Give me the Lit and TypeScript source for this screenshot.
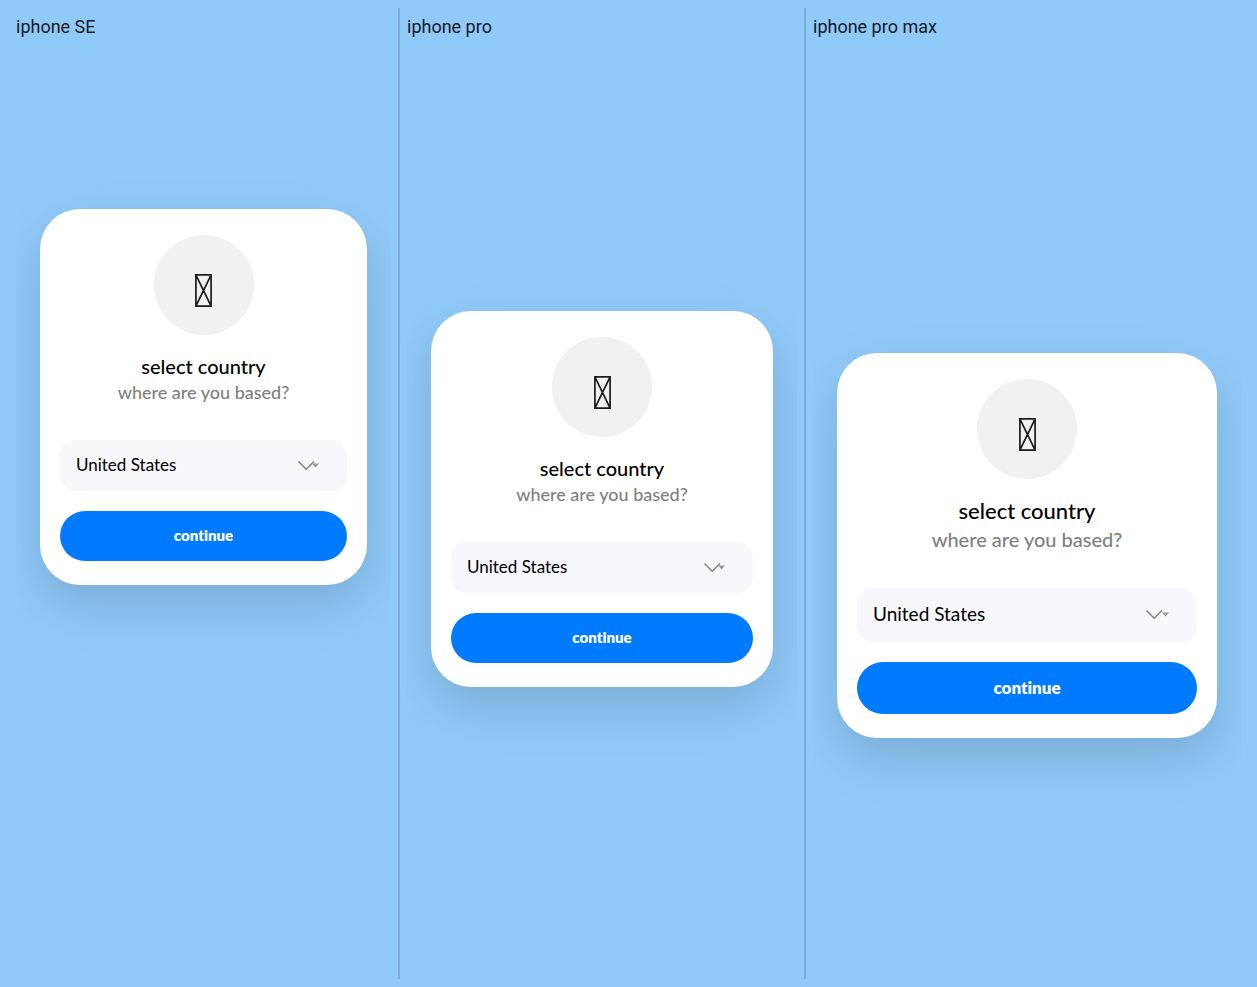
import { LitElement, html, css } from "lit";
import { customElement, property } from "lit/decorators.js";

@customElement("country-card")
class CountryCard extends LitElement {
  @property({ type: Boolean, reflect: true }) large = false;

  static styles = css`
    :host {
      display: block;
      --title: 20px;
      --sub: 18px;
      --field: 17px;
      --action: 15px;
      --line: 26px;
      --copy-top: 18px;
      --copy-bottom: 35px;
      --field-height: 51px;
      --action-height: 50px;
      font-family: Lato, "Open Sans", sans-serif;
      font-variant-ligatures: none;
    }
    :host([large]) {
      --title: 22px;
      --sub: 20px;
      --field: 19px;
      --action: 17px;
      --line: 28px;
      --field-height: 54px;
      --action-height: 52px;
    }
    .card {
      display: flex;
      flex-direction: column;
      padding: 26px 20px 24px;
      background: #fff;
      border-radius: 40px;
      box-shadow: 0 20px 50px rgba(0, 0, 0, 0.15);
    }
    .avatar {
      display: grid;
      place-items: center;
      align-self: center;
      width: 100px;
      height: 100px;
      padding-top: 10px;
      box-sizing: border-box;
      border-radius: 50%;
      background: #f1f1f1;
    }
    .avatar svg { display: block; }
    .copy {
      padding: var(--copy-top) 0 var(--copy-bottom);
      text-align: center;
      line-height: var(--line);
    }
    h2, p { margin: 0; line-height: inherit; }
    h2 { font-size: var(--title); font-weight: 500; color: #000; }
    p { font-size: var(--sub); font-weight: 500; color: #808080; }
    .field { display: grid; align-items: center; margin-bottom: 20px; }
    .field > * { grid-area: 1 / 1; }
    select {
      appearance: none;
      width: 100%;
      height: var(--field-height);
      margin: 0;
      padding: 0 56px 3px 16px;
      border: 0;
      border-radius: 16px;
      background: #f7f7fc;
      color: #000;
      font-family: inherit;
      font-size: var(--field);
      font-weight: 400;
      font-variant-ligatures: none;
    }
    .arrow { justify-self: end; margin-right: 28px; pointer-events: none; }
    button {
      height: var(--action-height);
      padding: 0 0 2px;
      border: 0;
      border-radius: 26px;
      background: #007aff;
      color: #fff;
      font-family: inherit;
      font-size: var(--action);
      font-weight: 800;
      font-variant-ligatures: none;
    }
  `;

  render() {
    const triangle = this.large ? "M16 3.5h7l-3.5 4z" : "M14 3.5h7l-3.5 4z";
    const width = this.large ? 23 : 21;
    return html`
      <section class="card">
        <div class="avatar">
          <svg width="17" height="33" viewBox="0 0 17 33" fill="none" stroke="#1c1c1c" stroke-width="1.7" aria-hidden="true">
            <path d="M.9.9h15.2v31.2H.9zM.9.9l15.2 31.2M16.1.9.9 32.1" />
          </svg>
        </div>
        <div class="copy">
          <h2>select country</h2>
          <p>where are you based?</p>
        </div>
        <div class="field">
          <select aria-label="country">
            <option>United States</option>
          </select>
          <svg class="arrow" width=${width} height="12" viewBox="0 0 ${width} 12" fill="none" aria-hidden="true">
            <path d="M.5 1.5 8.2 9.2 15.9 1.5" stroke="#808080" stroke-width="1.5" />
            <path d=${triangle} fill="#999" />
          </svg>
        </div>
        <button type="button">continue</button>
      </section>
    `;
  }
}

@customElement("app-root")
class AppRoot extends LitElement {
  static styles = css`
    :host {
      box-sizing: border-box;
      min-height: 100vh;
      padding: 8px;
      background: #90caf9;
      color: #14191f;
      font-family: Roboto, sans-serif;
      font-size: 18px;
      line-height: 22px;
      display: grid;
      grid-template-columns: 392fr 406fr 443fr;
    }
    .device {
      display: flex;
      flex-direction: column;
      min-width: 0;
      padding: 8px 7px 0;
      border-right: 2px solid rgba(0, 0, 0, 0.15);
    }
    .device:first-child { padding-left: 8px; }
    .device:last-child { padding-right: 8px; border-right: 0; }
    .screen { flex: 1; overflow: hidden; padding: 171px 24px 64px; }
    .pro { padding-top: 273px; }
    .max { padding-top: 315px; }
  `;

  render() {
    return html`
      <div class="device">
        <div>iphone SE</div>
        <div class="screen"><country-card></country-card></div>
      </div>
      <div class="device">
        <div>iphone pro</div>
        <div class="screen pro"><country-card></country-card></div>
      </div>
      <div class="device">
        <div>iphone pro max</div>
        <div class="screen max"><country-card large></country-card></div>
      </div>
    `;
  }
}
